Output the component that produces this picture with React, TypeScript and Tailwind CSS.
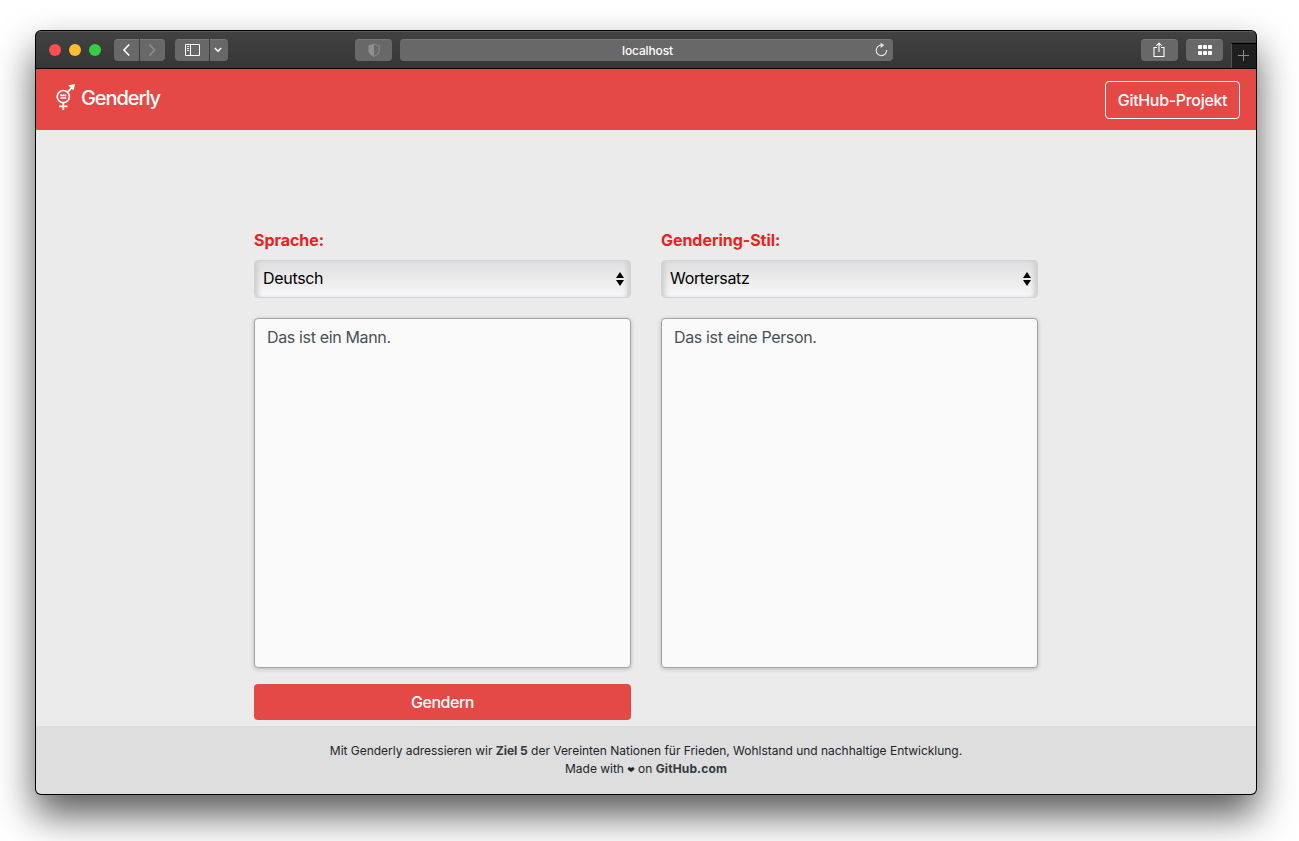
import React from "react";

const chip =
  "h-[22px] bg-[#686868] border-t border-[#777777] flex items-center justify-center text-white shrink-0";

function Toolbar() {
  return (
    <div className="flex h-[38px] shrink-0 border-b border-black bg-gradient-to-b from-[#424242] to-[#363636] shadow-[inset_0_1px_0_#5c5c5c]">
      <div className="flex flex-1 items-center pl-[13px]">
        <div className="flex gap-2">
          <span className="size-3 rounded-full bg-[#fc4f51]" />
          <span className="size-3 rounded-full bg-[#fdbd2f]" />
          <span className="size-3 rounded-full bg-[#36cf43]" />
        </div>
        <div className="ml-[13px] flex gap-px">
          <div className={`${chip} w-[25px] rounded-l`}>
            <svg width="9" height="14" viewBox="0 0 9 14" fill="none" stroke="currentColor" strokeWidth="1.7">
              <path d="M7.200 1.500 2 7l5.200 5.500" />
            </svg>
          </div>
          <div className={`${chip} w-[25px] rounded-r`}>
            <svg width="9" height="14" viewBox="0 0 9 14" fill="none" stroke="#8f8f8f" strokeWidth="1.600">
              <path d="M1.500 1.500 6.700 7l-5.200 5.500" />
            </svg>
          </div>
        </div>
        <div className="ml-[10px] flex">
          <div className={`${chip} w-[34px] rounded-l`}>
            <svg className="ml-px" width="15" height="12" viewBox="0 0 15 12" fill="none" stroke="currentColor">
              <path d="M.5.5h14v11H.5zM5.500.5v11" />
              <path d="M2 2.500h2M2 4.500h2M2 6.500h2" strokeWidth=".9" />
            </svg>
          </div>
          <div className={`${chip} ml-px w-[18px] rounded-r`}>
            <svg className="mr-[2px]" width="8" height="6" viewBox="0 0 8 6" fill="none" stroke="currentColor" strokeWidth="1.600">
              <path d="M.8 1 4 4.200 7.200 1" />
            </svg>
          </div>
        </div>
        <div className={`${chip} ml-[127px] w-[37px] rounded`}>
          <svg width="12" height="14" viewBox="0 0 12 14">
            <path d="M6 .8C4.500 1.900 2.800 2.400.9 2.500v5c0 2.700 2 4.700 5.100 5.900 3.100-1.200 5.100-3.200 5.100-5.900v-5C9.200 2.400 7.500 1.900 6 .8Z" fill="none" stroke="#8f8f8f" />
            <path d="M6 .8C4.500 1.900 2.800 2.400.9 2.500v5c0 2.700 2 4.700 5.100 5.900Z" fill="#8f8f8f" />
          </svg>
        </div>
        <div className={`${chip} relative ml-2 w-[493px] rounded`}>
          <span className="ml-[2px] mt-[2px] text-[12px] font-medium tracking-[-0.012em]">localhost</span>
          <svg className="absolute right-[5px] top-[2px]" width="14" height="15" viewBox="0 0 14 15" fill="none" stroke="#e2e2e2" strokeWidth="1.200">
            <path d="M7.600 3.200A5.200 5.200 0 1 0 12.600 8" />
            <path d="M6.600.4 10.200 3.200 6.600 6Z" fill="#e2e2e2" stroke="none" />
          </svg>
        </div>
        <div className={`${chip} ml-auto w-[37px] rounded`}>
          <svg className="mr-px" width="12" height="16" viewBox="0 0 12 16" fill="none" stroke="currentColor" strokeWidth="1.100">
            <path d="M4 5.500H1v9h10v-9H8M6 10V1.200M3.300 3.700 6 1l2.700 2.700" />
          </svg>
        </div>
        <div className={`${chip} ml-2 mr-2 w-[37px] rounded`}>
          <svg width="14" height="10" viewBox="0 0 14 10" fill="currentColor">
            <rect width="4" height="4" rx=".8" />
            <rect x="5" width="4" height="4" rx=".8" />
            <rect x="10" width="4" height="4" rx=".8" />
            <rect y="6" width="4" height="4" rx=".8" />
            <rect x="5" y="6" width="4" height="4" rx=".8" />
            <rect x="10" y="6" width="4" height="4" rx=".8" />
          </svg>
        </div>
      </div>
      <div className="mt-3 flex w-[25px] items-start justify-start border-l border-t border-l-[#555] border-t-black bg-[#1f1f1f] pl-[6px] pt-[6px]">
        <svg width="11" height="11" viewBox="0 0 11 11" stroke="#8a8a8a">
          <path d="M0 5.500h11M5.500 0v11" />
        </svg>
      </div>
    </div>
  );
}

function Navbar() {
  return (
    <nav className="flex h-[61px] shrink-0 items-start justify-between bg-[#e44945] pl-5 pr-4 pt-3 text-white">
      <div className="flex">
        <svg className="mt-[2px]" width="20" height="28" viewBox="0 0 20 28" fill="none" stroke="currentColor" strokeWidth="1.700">
          <circle cx="7.300" cy="13.600" r="6.100" />
          <path d="M4.300 12.300h6M4.300 15h6M7.300 19.600V27M3.200 23.300h8.300M11.600 9.200l5.200-5.600" />
          <path d="M12.200 2.200 19 1l-1.400 6.600Z" fill="currentColor" stroke="none" />
        </svg>
        <span className="ml-[5px] mt-[2px] text-[20px] font-medium leading-[30px] tracking-[-0.054em]">Genderly</span>
      </div>
      <button className="h-[38px] w-[135px] rounded border border-white text-[16px] font-medium tracking-[-0.02em]">
        GitHub-Projekt
      </button>
    </nav>
  );
}

function SelectBox({ value }: { value: string }) {
  return (
    <div className="mt-2 flex h-[38px] items-center justify-between rounded border border-[#ced4da] bg-gradient-to-b from-[#dfdfdf] to-[#f7f7f7] pl-2 pr-[6px] text-[16px] tracking-[-0.02em] text-black shadow-[inset_5px_0_4px_-2px_#cfcfcf,inset_-5px_0_4px_-2px_#cfcfcf]">
      <span className="mb-[2px]">{value}</span>
      <svg width="8" height="14" viewBox="0 0 8 14">
        <path d="M4 0 8 6H0zM4 14 0 8h8z" />
      </svg>
    </div>
  );
}

function Column({ label, value, text, children }: { label: string; value: string; text: string; children?: React.ReactNode }) {
  return (
    <div className="w-[377px]">
      <div className="h-6 text-[16px] font-bold leading-6 tracking-[-0.003em] text-[#e9221e]">{label}</div>
      <SelectBox value={value} />
      <div className="mt-5 h-[350px] rounded border border-[#a3a3a3] bg-[#fafafa] px-3 py-[6px] text-[16px] leading-6 tracking-[-0.022em] text-[#495057] shadow-[0_1px_4px_rgba(0,0,0,0.22)]">
        {text}
      </div>
      {children}
    </div>
  );
}

export default function App() {
  return (
    <div className="h-[841px] w-[1299px] overflow-hidden bg-white pl-[35px] pt-[30px] font-['Inter','Liberation_Sans',sans-serif]">
      <div className="h-[765px] w-[1222px] rounded-[6px] bg-black p-px shadow-[0_20px_38px_rgba(0,0,0,0.65)]">
        <div className="flex h-full flex-col overflow-hidden rounded-[5px]">
          <Toolbar />
          <Navbar />
          <main className="flex flex-1 justify-center gap-[30px] bg-[#ebebeb] pt-[98px]">
            <Column label="Sprache:" value="Deutsch" text="Das ist ein Mann.">
              <button className="mt-4 h-9 w-full rounded bg-[#e44945] text-[16px] font-medium tracking-[-0.03em] text-white">
                Gendern
              </button>
            </Column>
            <Column label="Gendering-Stil:" value="Wortersatz" text="Das ist eine Person." />
          </main>
          <footer className="h-[68px] shrink-0 bg-[#dedede] pt-4 text-center text-[12px] leading-[18px] tracking-[-0.002em] text-[#212529]">
            <p>
              Mit Genderly adressieren wir <b className="text-[#343a40]">Ziel 5</b> der Vereinten Nationen für Frieden, Wohlstand und nachhaltige Entwicklung.
            </p>
            <p>
              Made with <span className="font-['DejaVu_Sans'] text-[9px]">❤</span> on <b className="tracking-[0.01em] text-[#343a40]">GitHub.com</b>
            </p>
          </footer>
        </div>
      </div>
    </div>
  );
}
